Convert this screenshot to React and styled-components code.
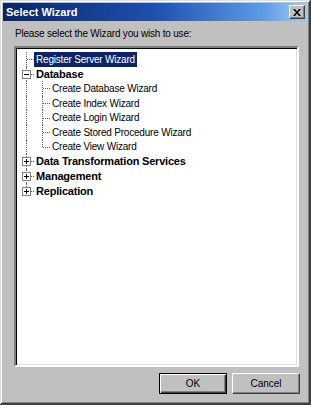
import styled, { createGlobalStyle } from "styled-components";

const GlobalStyle = createGlobalStyle`
  html, body {
    margin: 0;
    padding: 0;
    background: #c0c0c0;
    overflow: hidden;
  }
  * {
    box-sizing: border-box;
  }
`;

const items = [
  { label: "Register Server Wizard", level: 0, selected: true },
  { label: "Database", level: 0, bold: true, toggle: "minus" },
  { label: "Create Database Wizard", level: 1 },
  { label: "Create Index Wizard", level: 1 },
  { label: "Create Login Wizard", level: 1 },
  { label: "Create Stored Procedure Wizard", level: 1 },
  { label: "Create View Wizard", level: 1, last: true },
  { label: "Data Transformation Services", level: 0, bold: true, toggle: "plus" },
  { label: "Management", level: 0, bold: true, toggle: "plus" },
  { label: "Replication", level: 0, bold: true, toggle: "plus", last: true },
];

const App = () => {
  return (
    <Window>
      <GlobalStyle />
      <TitleBar>
        <Title>Select Wizard</Title>
        <CloseButton aria-label="Close">
          <svg width="8" height="7" viewBox="0 0 8 7">
            <path d="M0 0h2l2 2.5L6 0h2L5 3.5 8 7H6L4 4.5 2 7H0l3-3.5z" fill="#000" />
          </svg>
        </CloseButton>
      </TitleBar>
      <Body>
        <Prompt>Please select the Wizard you wish to use:</Prompt>
        <TreeBox>
          {items.map((item) => (
            <Row key={item.label}>
              {item.level === 1 && <Branch $pass />}
              <Branch $last={item.last}>
                {item.toggle && (
                  <Toggle>
                    <svg width="5" height="5" viewBox="0 0 5 5">
                      <rect x="0" y="2" width="5" height="1" fill="#000" />
                      {item.toggle === "plus" && (
                        <rect x="2" y="0" width="1" height="5" fill="#000" />
                      )}
                    </svg>
                  </Toggle>
                )}
              </Branch>
              <Label $bold={item.bold} $selected={item.selected}>
                {item.label}
              </Label>
            </Row>
          ))}
        </TreeBox>
        <Footer>
          <Button $default>OK</Button>
          <Button>Cancel</Button>
        </Footer>
      </Body>
    </Window>
  );
};

const Window = styled.div`
  width: 311px;
  height: 405px;
  display: flex;
  flex-direction: column;
  background: #c0c0c0;
  border-style: solid;
  border-width: 1px 2px 2px 1px;
  border-color: #dfdfdf #404040 #404040 #dfdfdf;
  box-shadow: inset 1px 1px 0 #ffffff, inset -1px -1px 0 #808080;
  padding: 2px;
  font-family: "Liberation Sans", Arial, sans-serif;
`;

const TitleBar = styled.div`
  height: 18px;
  display: flex;
  align-items: center;
  justify-content: space-between;
  padding: 0 2px 0 3px;
  background: linear-gradient(90deg, #0a246a 0%, #1f50b0 50%, #5a9ae6 85%, #a6caf0 100%);
`;

const Title = styled.span`
  color: #ffffff;
  font-weight: bold;
  font-size: 11px;
`;

const CloseButton = styled.button`
  width: 16px;
  height: 14px;
  padding: 0;
  display: flex;
  align-items: center;
  justify-content: center;
  background: #c0c0c0;
  border-style: solid;
  border-width: 1px;
  border-color: #ffffff #404040 #404040 #ffffff;
  box-shadow: inset -1px -1px 0 #808080;
`;

const Body = styled.div`
  flex: 1;
  display: flex;
  flex-direction: column;
  padding: 0 7px 0 11px;
`;

const Prompt = styled.div`
  margin: 7px 0 0 1px;
  height: 12px;
  font-size: 10px;
  line-height: 12px;
  letter-spacing: -0.2px;
  color: #000;
`;

const TreeBox = styled.div`
  margin: 6px 1px 0 0;
  height: 321px;
  background: #ffffff;
  border-style: solid;
  border-width: 2px;
  border-color: #808080 #ffffff #ffffff #808080;
  box-shadow: inset 1px 1px 0 #000000, inset -1px -1px 0 #dfdfdf;
  padding: 4px 0 0 2px;
`;

const Row = styled.div`
  display: flex;
  align-items: stretch;
  height: 14.6px;
`;

const Branch = styled.div`
  position: relative;
  width: 16px;
  flex: none;

  &::before {
    content: "";
    position: absolute;
    left: 8px;
    top: 0;
    bottom: ${(p) => (p.$last ? "50%" : "0")};
    border-left: 1px dotted #606060;
  }

  &::after {
    content: "";
    display: ${(p) => (p.$pass ? "none" : "block")};
    position: absolute;
    left: 9px;
    right: 0;
    top: 50%;
    border-top: 1px dotted #606060;
  }
`;

const Toggle = styled.span`
  position: absolute;
  z-index: 1;
  left: 4px;
  top: 50%;
  margin-top: -4px;
  width: 9px;
  height: 9px;
  background: #ffffff;
  border: 1px solid #808080;
  display: flex;
  align-items: center;
  justify-content: center;
`;

const Label = styled.span`
  display: flex;
  align-items: center;
  padding: 0 2px;
  font-size: ${(p) => (p.$bold ? "11px" : "10px")};
  letter-spacing: -0.2px;
  font-weight: ${(p) => (p.$bold ? "bold" : "normal")};
  color: ${(p) => (p.$selected ? "#ffffff" : "#000000")};
  background: ${(p) => (p.$selected ? "#0a246a" : "transparent")};
  white-space: nowrap;
`;

const Footer = styled.div`
  display: flex;
  justify-content: flex-end;
  gap: 5px;
  margin-top: 6px;
`;

const Button = styled.button`
  width: 68px;
  height: 21px;
  padding: 0;
  font-family: "Liberation Sans", Arial, sans-serif;
  font-size: 10px;
  color: #000;
  background: #c0c0c0;
  border-style: solid;
  border-width: 1px;
  border-color: ${(p) =>
    p.$default ? "#000000" : "#ffffff #404040 #404040 #ffffff"};
  box-shadow: ${(p) =>
    p.$default
      ? "inset 1px 1px 0 #ffffff, inset -1px -1px 0 #404040, inset -2px -2px 0 #808080"
      : "inset -1px -1px 0 #808080"};
`;

export default App;
